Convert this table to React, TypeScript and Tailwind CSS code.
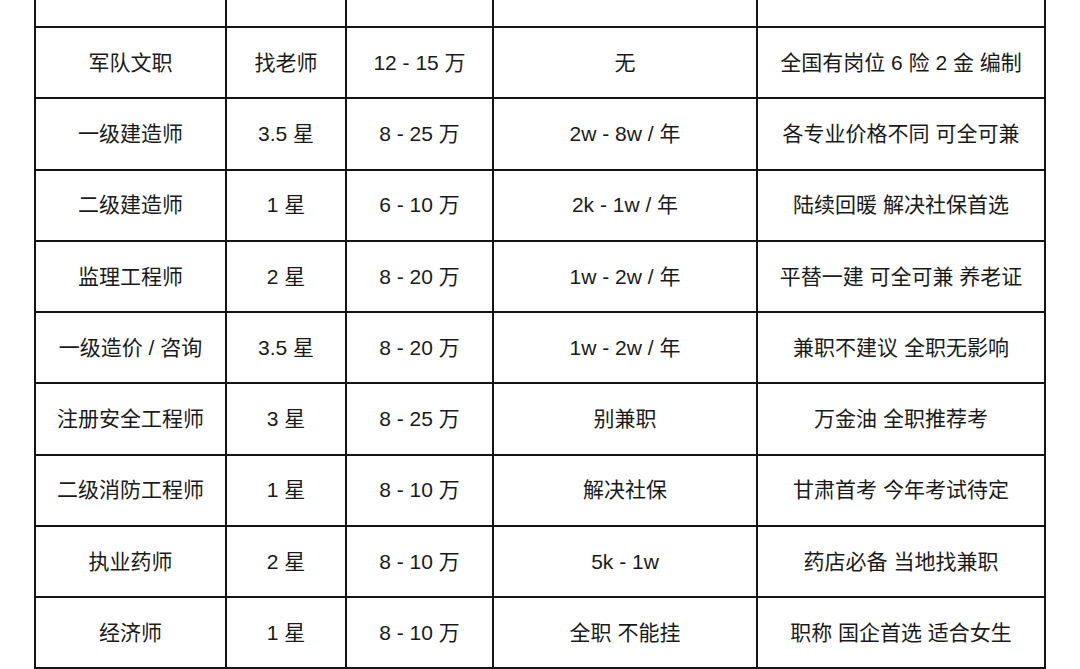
const rows: string[][] = [
  ["军队文职", "找老师", "12 - 15 万", "无", "全国有岗位 6 险 2 金 编制"],
  ["一级建造师", "3.5 星", "8 - 25 万", "2w - 8w / 年", "各专业价格不同 可全可兼"],
  ["二级建造师", "1 星", "6 - 10 万", "2k - 1w / 年", "陆续回暖 解决社保首选"],
  ["监理工程师", "2 星", "8 - 20 万", "1w - 2w / 年", "平替一建 可全可兼 养老证"],
  ["一级造价 / 咨询", "3.5 星", "8 - 20 万", "1w - 2w / 年", "兼职不建议 全职无影响"],
  ["注册安全工程师", "3 星", "8 - 25 万", "别兼职", "万金油 全职推荐考"],
  ["二级消防工程师", "1 星", "8 - 10 万", "解决社保", "甘肃首考 今年考试待定"],
  ["执业药师", "2 星", "8 - 10 万", "5k - 1w", "药店必备 当地找兼职"],
  ["经济师", "1 星", "8 - 10 万", "全职 不能挂", "职称 国企首选 适合女生"],
];

export default function App() {
  return (
    <div className="w-[1080px] h-[669px] bg-white overflow-hidden">
      <div
        className="ml-[34px] w-[1012px] bg-[#141414] grid grid-cols-[189px_118px_145px_262px_286px] auto-rows-[69.25px] grid-rows-[26px] gap-[2px] px-[2px] pb-[2px] text-[21px] text-[#1a1a1a]"
        style={{ fontFamily: '"Liberation Sans", "Noto Sans CJK SC", sans-serif' }}
      >
        {[0, 1, 2, 3, 4].map((i) => (
          <div key={"top" + i} className="bg-white" />
        ))}
        {rows.map((row, r) =>
          row.map((cell, c) => (
            <div key={r + "-" + c} className="bg-white flex items-center justify-center">
              {cell}
            </div>
          )),
        )}
      </div>
    </div>
  );
}
